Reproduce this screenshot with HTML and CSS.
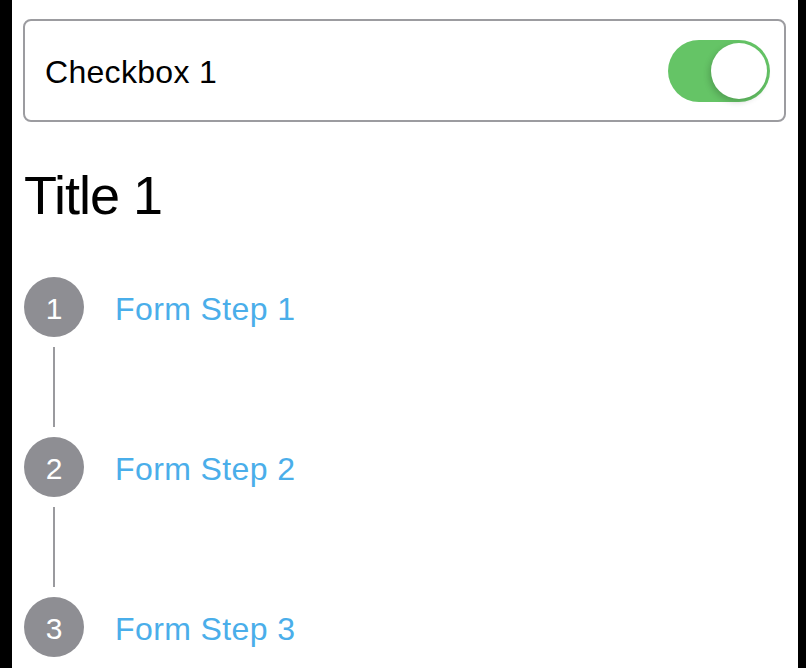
FILE: index.html
```html
<!DOCTYPE html>
<html lang="en">
<head>
<meta charset="utf-8">
<title>Form</title>
<link rel="stylesheet" href="styles.css">
</head>
<body>
<div class="screen">
  <div class="card">
    <span class="card-label">Checkbox 1</span>
    <div class="toggle on"><div class="knob"></div></div>
  </div>
  <h1 class="title">Title 1</h1>
  <div class="steps">
    <div class="step">
      <div class="badge">1</div>
      <div class="step-label">Form Step 1</div>
    </div>
    <div class="connector"><div class="line"></div></div>
    <div class="step">
      <div class="badge">2</div>
      <div class="step-label">Form Step 2</div>
    </div>
    <div class="connector"><div class="line"></div></div>
    <div class="step">
      <div class="badge">3</div>
      <div class="step-label">Form Step 3</div>
    </div>
  </div>
</div>
</body>
</html>
```

FILE: styles.css
```css
html, body {
  margin: 0;
  padding: 0;
  background: #000;
  height: 100%;
  overflow: hidden;
}
body {
  font-family: "Liberation Sans", Arial, sans-serif;
}
.screen {
  margin: 0 8px 0 12px;
  background: #fff;
  height: 668px;
  padding: 19px 12px 0 11px;
  box-sizing: border-box;
}
.card {
  box-sizing: border-box;
  height: 103px;
  border: 2px solid #9c9ca0;
  border-radius: 8px;
  display: flex;
  align-items: center;
  justify-content: space-between;
  padding: 0 14px 0 20px;
}
.card-label {
  font-size: 32px;
  letter-spacing: 0.3px;
  color: #000;
  line-height: 40px;
  padding-top: 2px;
}
.toggle {
  width: 102px;
  height: 62px;
  border-radius: 31px;
  background: #65c466;
  position: relative;
  padding: 3px;
  box-sizing: border-box;
  display: flex;
  justify-content: flex-end;
}
.knob {
  width: 56px;
  height: 56px;
  border-radius: 50%;
  background: #fff;
  box-shadow: -2px 3px 6px rgba(0, 0, 0, 0.18);
}
.title {
  margin: 41px 0 0 1px;
  font-size: 54px;
  font-weight: 400;
  letter-spacing: -1px;
  line-height: 64px;
  color: #000;
}
.steps {
  margin-top: 50px;
  padding-left: 1px;
}
.step {
  display: flex;
  align-items: center;
  height: 60px;
}
.badge {
  width: 60px;
  height: 60px;
  border-radius: 50%;
  background: #8e8e93;
  color: #fff;
  font-size: 30px;
  display: flex;
  align-items: center;
  justify-content: center;
  padding-top: 3px;
  box-sizing: border-box;
  flex: none;
}
.step-label {
  margin-left: 31px;
  font-size: 32px;
  letter-spacing: 0.4px;
  color: #4aaeea;
  padding-top: 5px;
}
.connector {
  width: 60px;
  height: 80px;
  margin: 10px 0;
  display: flex;
  justify-content: center;
}
.line {
  width: 2px;
  height: 100%;
  background: #9a9a9e;
}
```
